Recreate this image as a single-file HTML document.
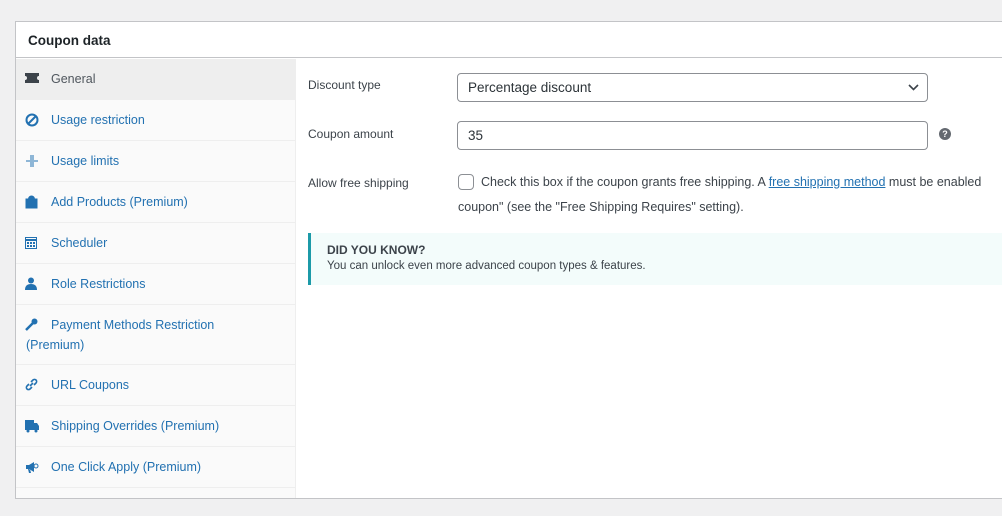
<!DOCTYPE html>
<html><head><style>
body{margin:0;width:1002px;height:516px;background:#f0f0f1;font-family:"Liberation Sans",sans-serif;font-size:13px;color:#3c434a;position:relative;overflow:hidden}
.panel{position:absolute;left:15px;top:21px;width:1000px;height:476px;background:#fff;border:1px solid #c3c4c7}
.hdr{height:35px;border-bottom:1px solid #c3c4c7;font-weight:bold;font-size:13.5px;color:#1d2327;line-height:37px;padding-left:12px}
.side{position:absolute;left:0;top:37px;width:279px;bottom:0;background:#fafafa;border-right:1px solid #eee}
.it{height:40px;border-bottom:1px solid #eee;color:#2271b1;line-height:40px;padding-left:35px;position:relative;font-size:12.5px}
.it svg{position:absolute;left:9px;top:13px}
.it.act{background:#eee;color:#50575e}
.it.tall{height:60px;line-height:20px;padding-top:10px;box-sizing:border-box;padding-left:10px;text-indent:25px}
.it.tall svg{top:13px}
.lab{position:absolute;left:308px;font-size:12px;color:#3c434a}
.inp{position:absolute;left:457px;width:471px;height:29px;border:1px solid #8c8f94;border-radius:4px;box-sizing:border-box;font-size:13.5px;color:#2c3338;line-height:27px;padding-left:10px}
a{color:#2271b1}
</style></head><body>
<div class="panel">
<div class="hdr">Coupon data</div>
<div class="side">
<div class="it act"><svg width="14" height="12" viewBox="0 0 14 12"><path d="M0 1h14v3a2 2 0 0 0 0 4v3H0V8a2 2 0 0 0 0-4z" fill="#3c434a"/></svg>General</div>
<div class="it"><svg width="14" height="14" viewBox="0 0 14 14"><circle cx="7" cy="7" r="5.5" fill="none" stroke="#2271b1" stroke-width="2"/><path d="M3 11L11 3" stroke="#2271b1" stroke-width="2"/></svg>Usage restriction</div>
<div class="it"><svg width="14" height="14" viewBox="0 0 14 14"><path d="M6 1v12M8 1v12M1 7h4M13 7H9" stroke="#2271b1" stroke-width="1"/></svg>Usage limits</div>
<div class="it"><svg width="13" height="14" viewBox="0 0 13 14"><path d="M1 4h11v9H1z M3.5 4a3 3 0 0 1 6 0" fill="#2271b1" stroke="#2271b1"/></svg>Add Products (Premium)</div>
<div class="it"><svg width="12" height="13" viewBox="0 0 12 13"><rect x="0.5" y="1.5" width="11" height="11" fill="none" stroke="#2271b1"/><path d="M0 3h12v2H0z M2 6h2v2H2zM5 6h2v2H5zM8 6h2v2H8zM2 9h2v2H2zM5 9h2v2H5zM8 9h2v2H8z" fill="#2271b1"/></svg>Scheduler</div>
<div class="it"><svg width="12" height="13" viewBox="0 0 12 13"><circle cx="6" cy="3.5" r="3" fill="#2271b1"/><path d="M0 13q0-6 6-6t6 6z" fill="#2271b1"/></svg>Role Restrictions</div>
<div class="it tall"><svg width="13" height="13" viewBox="0 0 13 13"><path d="M1 12l7-7" stroke="#2271b1" stroke-width="2.5"/><circle cx="9.5" cy="3.5" r="3" fill="#2271b1"/></svg>Payment Methods Restriction<br><span style="display:inline-block;text-indent:0">(Premium)</span></div>
<div class="it"><svg width="13" height="13" viewBox="0 0 13 13"><path d="M5 8l3-3M4 6l-2 2a2 2 0 0 0 3 3l2-2M9 7l2-2a2 2 0 0 0-3-3L6 4" stroke="#2271b1" stroke-width="1.6" fill="none"/></svg>URL Coupons</div>
<div class="it"><svg width="14" height="14" viewBox="0 0 14 14"><path d="M0 1h9v10H0z M9 4h3l2 3v4H9z" fill="#2271b1"/><circle cx="3" cy="12" r="1.5" fill="#2271b1"/><circle cx="11" cy="12" r="1.5" fill="#2271b1"/></svg>Shipping Overrides (Premium)</div>
<div class="it"><svg width="14" height="14" viewBox="0 0 14 14"><path d="M1 5h3l5-3v10L4 9H1z M3 9l1 4h2l-1-4" fill="#2271b1"/><circle cx="11" cy="6" r="2" fill="none" stroke="#2271b1"/></svg>One Click Apply (Premium)</div>
</div>
</div>
<div class="lab" style="top:78px">Discount type</div>
<div class="inp" style="top:73px">Percentage discount<svg style="position:absolute;right:8px;top:10px" width="11" height="7" viewBox="0 0 11 7"><path d="M1 1l4.5 4.5L10 1" stroke="#3c434a" stroke-width="1.6" fill="none"/></svg></div>
<div class="lab" style="top:127px">Coupon amount</div>
<div class="inp" style="top:121px">35</div>
<div style="position:absolute;left:939px;top:128px;width:12px;height:12px;border-radius:50%;background:#646970;color:#fff;font-size:9px;font-weight:bold;text-align:center;line-height:12px">?</div>
<div class="lab" style="top:176px">Allow free shipping</div>
<div style="position:absolute;left:458px;top:174px;width:14px;height:14px;border:1px solid #8c8f94;border-radius:4px;background:#fff"></div>
<div style="position:absolute;left:481px;top:175px;font-size:12.5px;white-space:nowrap;color:#3c434a">Check this box if the coupon grants free shipping. A <a href="#x">free shipping method</a> must be enabled</div>
<div style="position:absolute;left:458px;top:200px;font-size:12.5px;white-space:nowrap;color:#3c434a">coupon" (see the "Free Shipping Requires" setting).</div>
<div style="position:absolute;left:308px;top:233px;width:700px;height:52px;background:#f3fcfb;border-left:3px solid #1c9aa8;box-sizing:border-box">
<div style="position:absolute;left:16px;top:10px;font-weight:bold;font-size:12px;color:#3c434a">DID YOU KNOW?</div>
<div style="position:absolute;left:16px;top:27px;font-size:11.5px;color:#3c434a">You can unlock even more advanced coupon types &amp; features.</div>
</div>
</body></html>
